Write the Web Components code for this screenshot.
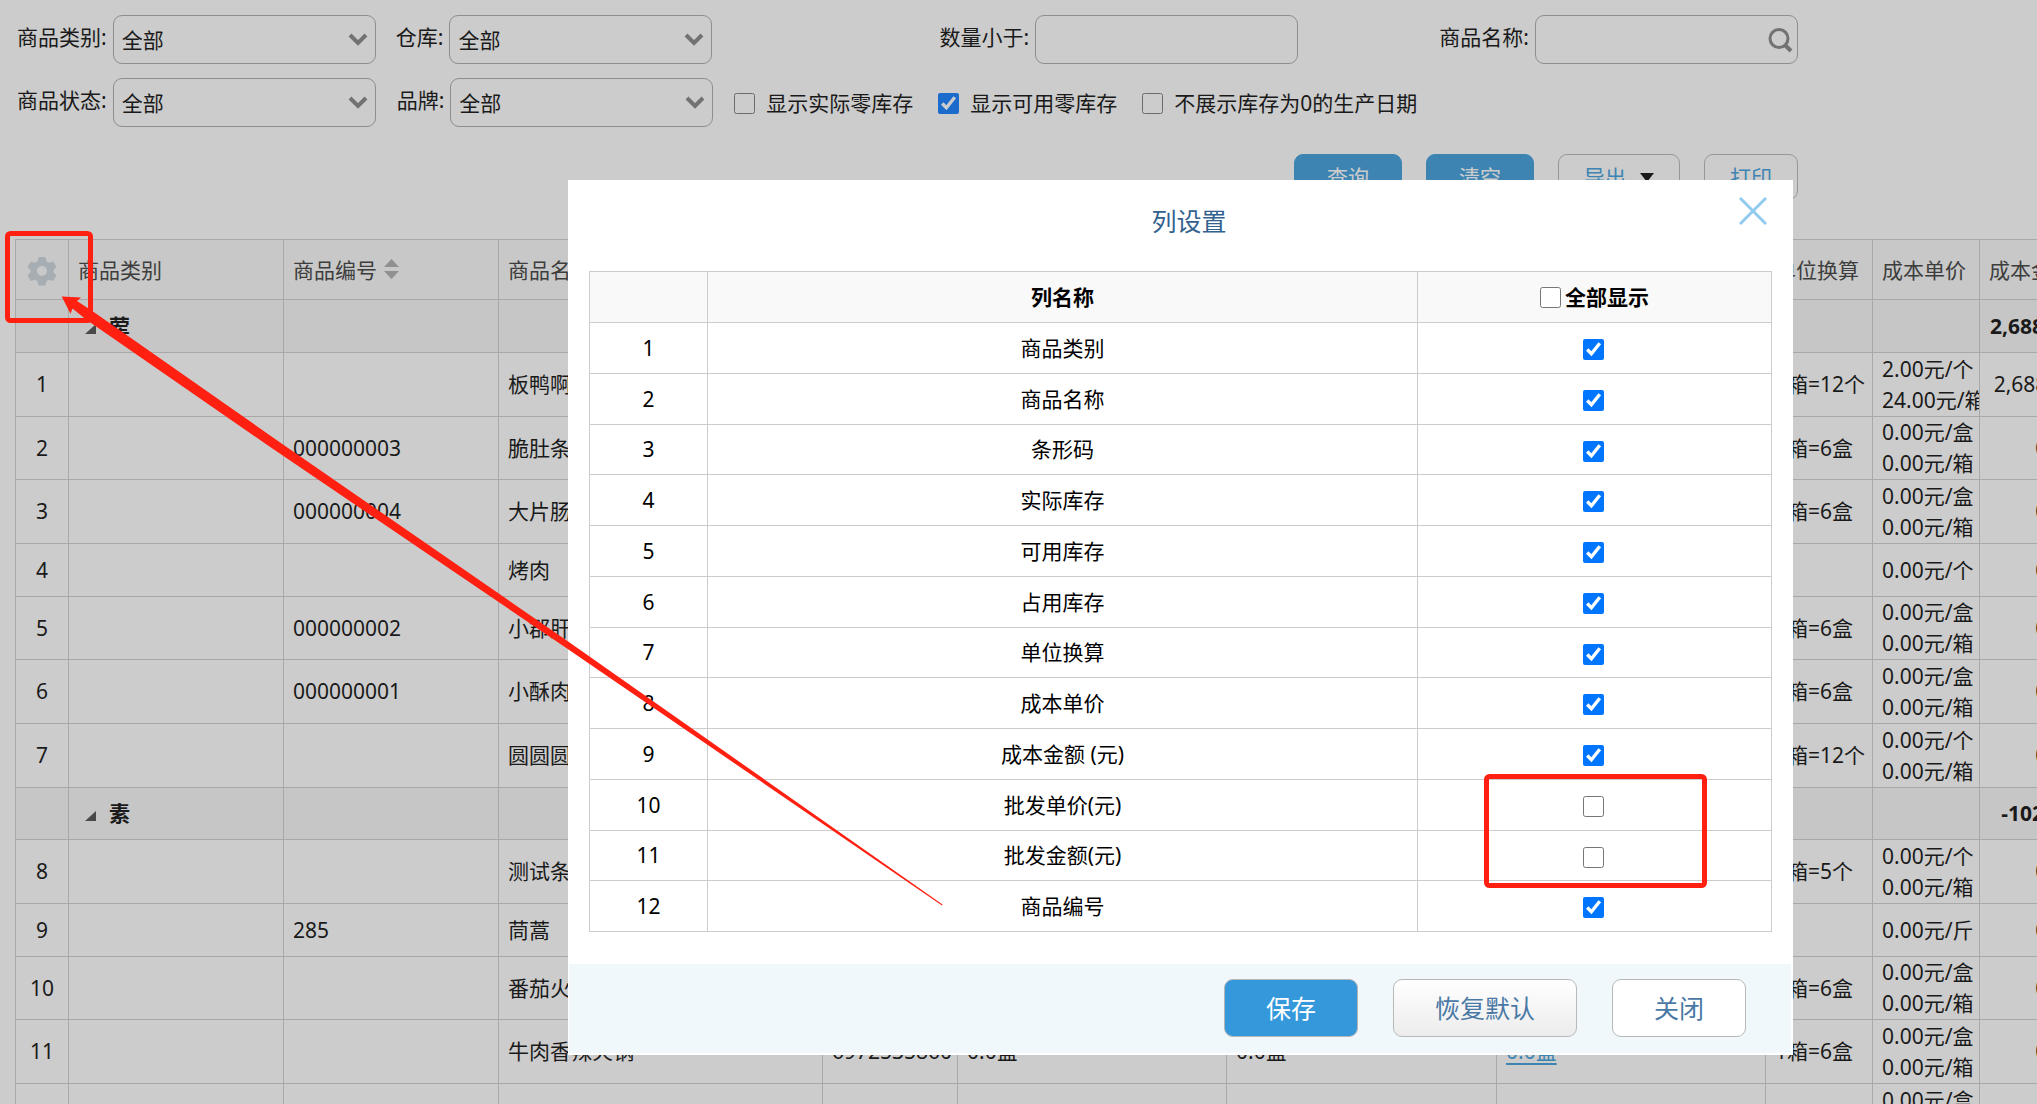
<!DOCTYPE html>
<html lang="zh-CN">
<head>
<meta charset="utf-8">
<title>库存查询</title>
<style>
  html, body { margin: 0; height: 100%; }
  body {
    background: #fff; color: #000; overflow: hidden;
    font: 21px/31px "Noto Sans", "Noto Sans CJK SC", sans-serif;
  }
</style>
</head>
<body>
<stock-page></stock-page>

<script>
const CONTROL = `
  *, *::before { box-sizing: border-box; }
  button, input, select { font: inherit; color: inherit; margin: 0; }
`;

function define(name, html, setup) {
  const template = document.createElement('template');
  template.innerHTML = html;
  customElements.define(name, class extends HTMLElement {
    constructor() {
      super();
      this.attachShadow({ mode: 'open' }).append(template.content.cloneNode(true));
    }
    connectedCallback() { if (setup) setup(this, this.shadowRoot); }
  });
}

/* Labelled drop-down */
define('select-field', `
  <style>${CONTROL}
    :host { display: flex; gap: 6px; }
    label { white-space: nowrap; padding-top: 7px; }
    .box { display: grid; width: 263px; align-items: center; }
    select, svg { grid-area: 1 / 1; }
    select { appearance: none; width: 100%; height: 49px; padding: 1px 8px 0; background: #fff;
      border: 1px solid #a6a6a6; border-radius: 9px; }
    svg { justify-self: end; margin-right: 8px; pointer-events: none; }
  </style>
  <label for="s"></label>
  <div class="box">
    <select id="s"><option>全部</option></select>
    <svg width="20" height="14" viewBox="0 0 20 14" fill="none" stroke="#7f7f7f" stroke-width="4"><path d="M2 2l8 8 8-8"/></svg>
  </div>`,
  (el, root) => { root.querySelector('label').textContent = el.getAttribute('label'); });

/* Labelled text box; the slot takes an icon shown inside the box */
define('text-field', `
  <style>${CONTROL}
    :host { display: flex; gap: 6px; }
    label { white-space: nowrap; padding-top: 7px; }
    .box { display: grid; width: 263px; align-items: center; }
    input, slot { grid-area: 1 / 1; }
    input { width: 100%; height: 49px; padding: 0 9px; background: #fff;
      border: 1px solid #a6a6a6; border-radius: 9px; }
    ::slotted(svg) { grid-area: 1 / 1; justify-self: end; margin-right: 5px; pointer-events: none; }
  </style>
  <label for="t"></label>
  <div class="box"><input id="t" type="text"><slot></slot></div>`,
  (el, root) => { root.querySelector('label').textContent = el.getAttribute('label'); });

/* Tick box, with its text passed in */
define('check-field', `
  <style>${CONTROL}
    :host { display: inline-flex; }
    label { display: flex; align-items: center; gap: var(--check-gap, 11px); white-space: nowrap; }
    input { width: 21px; height: 21px; flex: none; accent-color: #0075ff; }
  </style>
  <label><input type="checkbox"><slot></slot></label>`,
  (el, root) => {
    const input = root.querySelector('input');
    input.checked = el.hasAttribute('checked');
    if (el.title) input.setAttribute('aria-label', el.title);
  });

/* Push button */
define('push-button', `
  <style>${CONTROL}
    :host { display: inline-flex; }
    button { display: flex; align-items: center; justify-content: center; gap: 14px; white-space: nowrap;
      height: 46px; padding: 0 25px; border: 1px solid #b4b4b4; border-radius: 9px; background: #fff; color: #3498db; }
    :host([kind~=primary]) button { padding: 0 32px; background: #3498db; border-color: #3498db; color: #fff; }
    :host([kind~=large]) button { height: 58px; padding: 0 41px; border-color: #b8b8b8; font-size: 25px; color: #4a79a5; }
    :host([kind~=large][kind~=primary]) button { border-color: #b4b4b4; color: #fff; }
    :host([kind~=soft]) button { background: linear-gradient(#fff, #ececec); }
  </style>
  <button type="button"><slot></slot></button>`);

/* Search form above the grid */
define('filter-bar', `
  <style>${CONTROL}
    :host { display: block; padding: 15px 239px 0 17px; }
    .first { display: grid; grid-template-columns: 379fr 544fr 500fr 358fr; }
    .second { display: flex; align-items: center; gap: 21px; margin-top: 14px; }
    .checks { display: flex; gap: 25px; padding-top: 2px; }
    .actions { display: flex; justify-content: flex-end; gap: 24px; margin-top: 27px; }
  </style>
  <div class="first">
    <select-field label="商品类别:"></select-field>
    <select-field label="仓库:"></select-field>
    <text-field label="数量小于:"></text-field>
    <text-field label="商品名称:">
      <svg width="25" height="26" viewBox="0 0 25 26" fill="none" stroke="#7f7f7f"><circle cx="11" cy="11.500" r="9" stroke-width="3"/><path d="M17 18l6 6" stroke-width="4"/></svg>
    </text-field>
  </div>
  <div class="second">
    <select-field label="商品状态:"></select-field>
    <select-field label="品牌:"></select-field>
    <div class="checks">
      <check-field>显示实际零库存</check-field>
      <check-field checked>显示可用零库存</check-field>
      <check-field>不展示库存为0的生产日期</check-field>
    </div>
  </div>
  <div class="actions">
    <push-button kind="primary">查询</push-button>
    <push-button kind="primary">清空</push-button>
    <push-button>导出<svg width="14" height="9" viewBox="0 0 14 9"><path d="M0 0h14L7 9z" fill="#000"/></svg></push-button>
    <push-button>打印</push-button>
  </div>`);

/* Stock table */
const ROWS = [
  { group: '荤', total: '2,688.00', h: 53 },
  { n: 1, name: '板鸭啊', unit: '1箱=12个', price: ['2.00元/个', '24.00元/箱'], sum: '2,688.00', h: 64 },
  { n: 2, code: '000000003', name: '脆肚条', unit: '1箱=6盒', price: ['0.00元/盒', '0.00元/箱'], h: 63 },
  { n: 3, code: '000000004', name: '大片肠', unit: '1箱=6盒', price: ['0.00元/盒', '0.00元/箱'], h: 64 },
  { n: 4, name: '烤肉', price: ['0.00元/个'], h: 53 },
  { n: 5, code: '000000002', name: '小郡肝', unit: '1箱=6盒', price: ['0.00元/盒', '0.00元/箱'], h: 63 },
  { n: 6, code: '000000001', name: '小酥肉', unit: '1箱=6盒', price: ['0.00元/盒', '0.00元/箱'], h: 64 },
  { n: 7, name: '圆圆圆', unit: '1箱=12个', price: ['0.00元/个', '0.00元/箱'], h: 64 },
  { group: '素', total: '-102.00', h: 52 },
  { n: 8, name: '测试条', unit: '1箱=5个', price: ['0.00元/个', '0.00元/箱'], h: 64 },
  { n: 9, code: '285', name: '茼蒿', price: ['0.00元/斤'], h: 53 },
  { n: 10, name: '番茄火', unit: '1箱=6盒', price: ['0.00元/盒', '0.00元/箱'], h: 63 },
  { n: 11, name: '牛肉香辣火锅', bar: '6972535860', real: '0.0盒', free: '0.0盒', held: '0.0盒', unit: '1箱=6盒', price: ['0.00元/盒', '0.00元/箱'], h: 64 },
  { price: ['0.00元/盒', '0.00元/箱'], h: 64 },
];

define('stock-grid', `
  <style>${CONTROL}
    :host { display: block; overflow: hidden; padding-left: 15px; margin-top: 39px; }
    table { table-layout: fixed; width: 2071px; border-collapse: collapse; }
    th, td { border: 1px solid #ccc; padding: 0 9px; text-align: left; font-weight: 400; white-space: nowrap; overflow: hidden; }
    th { height: 60px; padding-top: 2px; background: #f9f9f9; color: #333; }
    .num { padding-left: 0; padding-right: 0; text-align: center; }
    .sum { text-align: right; }
    th.sum { text-align: left; }
    .group td { background: #f7f7f7; font-weight: 700; }
    .group .sum { padding-right: 12px; }
    a { color: #3498db; text-underline-offset: 4px; }
    .gear { border: 0; padding: 0; background: none; display: block; margin: 0 auto; height: 30px; }
    .sort { margin-left: 7px; vertical-align: -1px; }
    .fold { margin: 0 13px 0 7px; }
  </style>
  <table>
    <colgroup>
      <col style="width:53px"><col style="width:215px"><col style="width:215px"><col style="width:324px">
      <col style="width:135px"><col style="width:269px"><col style="width:270px"><col style="width:269px">
      <col style="width:107px"><col style="width:107px"><col style="width:107px">
    </colgroup>
    <thead><tr>
      <th class="num"><button class="gear" type="button" aria-label="列设置">
        <svg width="30" height="30" viewBox="0 0 30 30" fill="#c9d3db"><path fill-rule="evenodd" d="M11.500 1h7l1 4.200 2.600 1.500 4.200-1.300 3.200 5.800-3 2.600v2.800l3 2.600-3.200 5.800-4.200-1.300-2.600 1.500-1 4.200h-7l-1-4.200-2.600-1.500-4.200 1.300-3.200-5.800 3-2.600v-2.800l-3-2.600 3.200-5.800 4.200 1.300 2.600-1.500zM15 10a5 5 0 1 0 0 10 5 5 0 0 0 0-10z"/></svg></button></th>
      <th>商品类别</th>
      <th>商品编号<svg class="sort" width="15" height="20" viewBox="0 0 15 20" fill="#aaa"><path d="M7.500 0L15 8H0zM7.500 20L15 12H0z"/></svg></th>
      <th>商品名称</th><th></th><th></th><th></th><th></th>
      <th>单位换算</th><th>成本单价</th><th class="sum">成本金额</th>
    </tr></thead>
    <tbody></tbody>
  </table>`,
  (el, root) => {
    const t = v => v || '';
    root.querySelector('tbody').innerHTML = ROWS.map(r => r.group
      ? `<tr class="group" style="height:${r.h}px"><td></td>
          <td><svg class="fold" width="11" height="10" viewBox="0 0 11 10"><path d="M11 0v10H0z" fill="#444"/></svg>${r.group}</td>
          ${'<td></td>'.repeat(8)}<td class="sum">${r.total}</td></tr>`
      : `<tr style="height:${r.h}px"><td class="num">${t(r.n)}</td><td></td><td>${t(r.code)}</td><td>${r.name || ''}</td>
          <td>${t(r.bar)}</td><td>${t(r.real)}</td><td>${t(r.free)}</td>
          <td>${r.held ? `<a href="#held">${r.held}</a>` : ''}</td>
          <td>${t(r.unit)}</td><td>${r.price.join('<br>')}</td><td class="sum">${r.sum || '0.00'}</td></tr>`).join('');
  });

/* Column settings dialog */
const COLUMNS = ['商品类别', '商品名称', '条形码', '实际库存', '可用库存', '占用库存', '单位换算',
  '成本单价', '成本金额 (元)', '批发单价(元)', '批发金额(元)', '商品编号'];
const HIDDEN_COLUMNS = ['批发单价(元)', '批发金额(元)'];

define('column-dialog', `
  <style>${CONTROL}
    :host { position: fixed; inset: 0; display: flex; align-items: flex-start; padding: 180px 0 0 568px;
      background: rgba(85, 85, 85, .3); --check-gap: 4px; }
    section { display: flex; flex-direction: column; width: 1225px; background: #fff; padding: 0 2px 2px 1px; }
    header { display: grid; grid-template-columns: 1fr auto 1fr; align-items: center; height: 91px; padding: 0 24px 9px 42px; }
    h2 { grid-column: 2; margin: 0; font-size: 25px; font-weight: 400; color: #33628f; }
    header button { justify-self: end; align-self: start; margin-top: 17px; width: 28px; height: 28px; padding: 0; border: 0; background: none; }
    header svg { display: block; }
    table { table-layout: fixed; border-collapse: collapse; margin: 0 19px 0 20px; }
    th, td { height: 51px; padding: 0; border: 1px solid #ccc; text-align: center; }
    th { background: #f9f9f9; font-weight: 700; }
    tr:nth-child(4n+3) td { height: 50px; }
    check-field { vertical-align: middle; }
    td:last-child { padding-right: 2px; }
    footer { display: flex; justify-content: flex-end; gap: 35px; margin-top: 32px; padding: 15px 45px 16px; background: #f0f8fc; }
  </style>
  <section role="dialog" aria-labelledby="title">
    <header>
      <h2 id="title">列设置</h2>
      <button type="button" aria-label="关闭窗口"><svg width="28" height="28" viewBox="0 0 28 28" fill="none" stroke="#92cbf0" stroke-width="3"><path d="M1 1l26 26M27 1L1 27"/></svg></button>
    </header>
    <table>
      <colgroup><col style="width:118px"><col><col style="width:354px"></colgroup>
      <thead><tr><th></th><th>列名称</th><th><check-field>全部显示</check-field></th></tr></thead>
      <tbody></tbody>
    </table>
    <footer>
      <push-button kind="large primary">保存</push-button>
      <push-button kind="large soft">恢复默认</push-button>
      <push-button kind="large">关闭</push-button>
    </footer>
  </section>`,
  (el, root) => {
    root.querySelector('tbody').innerHTML = COLUMNS.map((c, i) =>
      `<tr><td>${i + 1}</td><td>${c}</td><td><check-field title="${c}" style="--check-gap:0px"${HIDDEN_COLUMNS.includes(c) ? '' : ' checked'}></check-field></td></tr>`).join('');
  });

/* Red marks that point from the dialog to the gear */
define('guide-marks', `
  <style>
    :host { position: fixed; inset: 0; pointer-events: none; }
    svg { display: block; width: 100%; height: 100%; }
  </style>
  <svg fill="none" stroke="#ff2011" stroke-width="5">
    <rect x="7.500" y="233.500" width="83" height="87" rx="3"/>
    <rect x="1486.500" y="776.500" width="218" height="109" rx="3"/>
    <path stroke="none" fill="#ff2011" d="M61.700 296.500L81 297.500 77 301 93 311.500 283 444.500 571 643.500 942.500 904.500 942 905.500 567 648.500 268 445.500 86 319.500 72.500 308.500 70.500 313.800z"/>
  </svg>`);

define('stock-page', `
  <style>:host { display: block; height: 100vh; overflow: hidden; }</style>
  <filter-bar></filter-bar>
  <stock-grid></stock-grid>
  <column-dialog></column-dialog>
  <guide-marks></guide-marks>`);
</script>
</body>
</html>
